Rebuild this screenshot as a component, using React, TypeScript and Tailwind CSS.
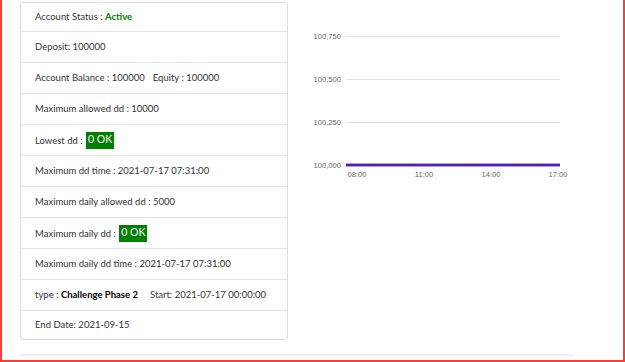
const rows: React.ReactNode[] = [
  <>
    Account Status : <b className="font-bold text-[#008000]">Active</b>
  </>,
  <>Deposit: 100000</>,
  <>
    Account Balance : 100000<span className="ml-[8px]">Equity : 100000</span>
  </>,
  <>Maximum allowed dd : 10000</>,
  <>
    Lowest dd : <Badge />
  </>,
  <>Maximum dd time : 2021-07-17 07:31:00</>,
  <>Maximum daily allowed dd : 5000</>,
  <>
    Maximum daily dd : <Badge />
  </>,
  <>Maximum daily dd time : 2021-07-17 07:31:00</>,
  <>
    type : <b className="font-bold text-black">Challenge Phase 2</b>
    <span className="ml-[12px]">Start: 2021-07-17 00:00:00</span>
  </>,
  <>End Date: 2021-09-15</>,
];

function Badge() {
  return (
    <span className="ml-[1px] inline-flex h-[17px] items-center bg-[#008000] px-[2px] text-[10.5px] text-white">
      0 OK
    </span>
  );
}

function Chart() {
  const yTicks = [
    { y: 36, label: "100,750" },
    { y: 79, label: "100,500" },
    { y: 122, label: "100,250" },
    { y: 165, label: "100,000" },
  ];
  const xTicks = [
    { x: 356, label: "08:00" },
    { x: 423, label: "11:00" },
    { x: 490, label: "14:00" },
    { x: 557, label: "17:00" },
  ];
  return (
    <svg width="300" height="190" viewBox="290 0 300 190" className="block">
      {yTicks.map((t) => (
        <g key={t.label}>
          {t.y !== 165 && (
            <line x1="345" x2="559" y1={t.y + 0.5} y2={t.y + 0.5} stroke="#e0e0e0" strokeWidth="1" />
          )}
          <text
            x="340"
            y={t.y + 3}
            textAnchor="end"
            fontSize="7.6"
            fill="#666"
            fontFamily="'Liberation Sans', Arial, sans-serif"
          >
            {t.label}
          </text>
        </g>
      ))}
      <line x1="345" x2="559" y1="165" y2="165" stroke="#7a34b8" strokeWidth="3" />
      <line x1="345" x2="559" y1="165" y2="165" stroke="#1e14c8" strokeWidth="1.2" />
      {xTicks.map((t) => (
        <text
          key={t.label}
          x={t.x}
          y="177"
          textAnchor="middle"
          fontSize="7.6"
          fill="#666"
          fontFamily="'Liberation Sans', Arial, sans-serif"
        >
          {t.label}
        </text>
      ))}
    </svg>
  );
}

export default function App() {
  return (
    <div className="h-[362px] w-[625px] overflow-hidden border-x-2 border-b-2 border-[#f44336] bg-white font-['Lato','Noto_Sans',sans-serif] text-[9.5px] text-[#333]">
      <div className="flex pl-[18px] pt-[2px]">
        <div className="w-[268px] rounded-[3px] border border-[#ddd] bg-white">
          {rows.map((r, i) => (
            <div
              key={i}
              className={
                i === 0
                  ? "flex h-[29px] items-center border-b border-[#e3e3e3] px-[14px]"
                  : i === rows.length - 1
                    ? "flex h-[28px] items-center px-[14px]"
                    : "flex h-[31px] items-center border-b border-[#e3e3e3] px-[14px]"
              }
            >
              <span className="whitespace-nowrap">{r}</span>
            </div>
          ))}
        </div>
        <div className="-mt-[2px] ml-[3px]">
          <Chart />
        </div>
      </div>
      <div className="ml-[18px] mt-[14px] w-[554px] border-t-2 border-[#f0f0f0]" />
    </div>
  );
}
